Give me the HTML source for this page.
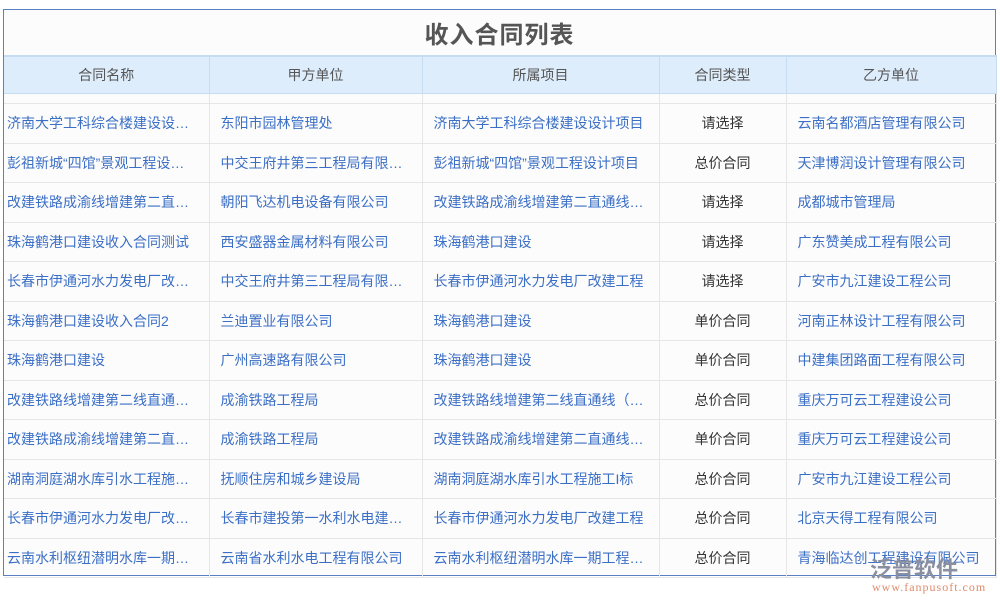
<!DOCTYPE html>
<html><head><meta charset="utf-8"><style>
body{margin:0;width:1000px;height:600px;background:#fff;font-family:"Liberation Sans","Noto Sans CJK SC",sans-serif;position:relative;overflow:hidden}
.frame{position:absolute;left:3px;top:9px;width:993px;height:567px;border:1px solid #5a7fc4;background:#fcfcfc;box-sizing:border-box}
.title{position:absolute;left:0;right:0;top:5px;text-align:center;font-size:24px;font-weight:bold;color:#555;letter-spacing:1px}
table{position:absolute;left:0;top:45px;border-collapse:collapse;table-layout:fixed;width:992px}
th{background:#deedfb;height:36px;font-weight:normal;font-size:14px;color:#555;border-top:2px solid #c5dcf2;border-right:1px solid #c7dcef;border-bottom:1px solid #c7dcef;padding:0}
td{height:38.5px;font-size:14px;color:#3b6fc6;border-right:1px solid #e6e6e6;border-bottom:1px solid #e6e6e6;padding:0 8px 0 11px;white-space:nowrap;overflow:hidden;text-overflow:ellipsis}
td:first-child{padding-left:3px;padding-right:18px}
td.c{text-align:center;color:#333;padding:0}
tr.sp td{height:9px}
.logo{position:absolute;left:870px;top:552px;font-size:22px;font-weight:bold;color:#8a8fa0}
.url{position:absolute;left:872px;top:580px;font-size:12px;color:#e08a6a;font-family:"Liberation Serif",serif;letter-spacing:1px}
</style></head><body>
<div class="frame">
<div class="title">收入合同列表</div>
<table>
<colgroup><col style="width:205px"><col style="width:213px"><col style="width:237px"><col style="width:127px"><col style="width:210px"></colgroup>
<tr><th>合同名称</th><th>甲方单位</th><th>所属项目</th><th>合同类型</th><th>乙方单位</th></tr>
<tr class="sp"><td></td><td></td><td></td><td class="c"></td><td></td></tr>
<tr><td>济南大学工科综合楼建设设计项目</td><td>东阳市园林管理处</td><td>济南大学工科综合楼建设设计项目</td><td class="c">请选择</td><td>云南名都酒店管理有限公司</td></tr>
<tr><td>彭祖新城“四馆”景观工程设计项目</td><td>中交王府井第三工程局有限公司</td><td>彭祖新城“四馆”景观工程设计项目</td><td class="c">总价合同</td><td>天津博润设计管理有限公司</td></tr>
<tr><td>改建铁路成渝线增建第二直通线工程</td><td>朝阳飞达机电设备有限公司</td><td>改建铁路成渝线增建第二直通线工程</td><td class="c">请选择</td><td>成都城市管理局</td></tr>
<tr><td>珠海鹤港口建设收入合同测试</td><td>西安盛器金属材料有限公司</td><td>珠海鹤港口建设</td><td class="c">请选择</td><td>广东赞美成工程有限公司</td></tr>
<tr><td>长春市伊通河水力发电厂改建工程</td><td>中交王府井第三工程局有限公司</td><td>长春市伊通河水力发电厂改建工程</td><td class="c">请选择</td><td>广安市九江建设工程公司</td></tr>
<tr><td>珠海鹤港口建设收入合同2</td><td>兰迪置业有限公司</td><td>珠海鹤港口建设</td><td class="c">单价合同</td><td>河南正林设计工程有限公司</td></tr>
<tr><td>珠海鹤港口建设</td><td>广州高速路有限公司</td><td>珠海鹤港口建设</td><td class="c">单价合同</td><td>中建集团路面工程有限公司</td></tr>
<tr><td>改建铁路线增建第二线直通线工程</td><td>成渝铁路工程局</td><td>改建铁路线增建第二线直通线（成渝线）</td><td class="c">总价合同</td><td>重庆万可云工程建设公司</td></tr>
<tr><td>改建铁路成渝线增建第二直通线工程</td><td>成渝铁路工程局</td><td>改建铁路成渝线增建第二直通线工程</td><td class="c">单价合同</td><td>重庆万可云工程建设公司</td></tr>
<tr><td>湖南洞庭湖水库引水工程施工I标</td><td>抚顺住房和城乡建设局</td><td>湖南洞庭湖水库引水工程施工I标</td><td class="c">总价合同</td><td>广安市九江建设工程公司</td></tr>
<tr><td>长春市伊通河水力发电厂改建工程</td><td>长春市建投第一水利水电建设公司</td><td>长春市伊通河水力发电厂改建工程</td><td class="c">总价合同</td><td>北京天得工程有限公司</td></tr>
<tr><td>云南水利枢纽潜明水库一期工程施工</td><td>云南省水利水电工程有限公司</td><td>云南水利枢纽潜明水库一期工程施工</td><td class="c">总价合同</td><td>青海临达创工程建设有限公司</td></tr>
</table>
</div>
<div class="logo">泛普软件</div>
<div class="url">www.fanpusoft.com</div>
</body></html>
